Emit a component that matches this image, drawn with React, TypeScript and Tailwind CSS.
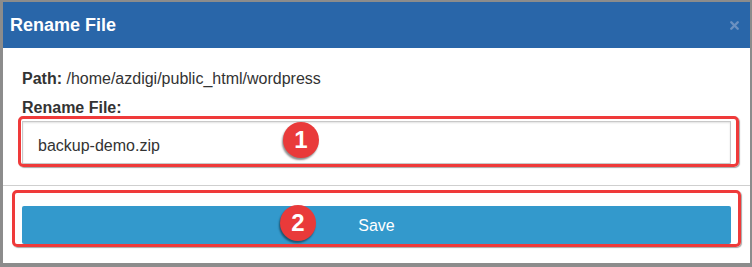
import { X } from "lucide-react";

function Badge({ n, className }: { n: string; className: string }) {
  return (
    <div
      className={`absolute flex h-[36px] w-[36px] items-center justify-center rounded-full bg-[#e93a3a] text-[24px] font-bold text-white shadow-[-1px_2px_2px_rgba(0,0,0,0.45)] ${className}`}
    >
      {n}
    </div>
  );
}

export default function App() {
  return (
    <div className="relative h-[267px] w-[752px] bg-[#8c8c8c] pb-[4px] pl-[3px] pr-[2px] pt-[2px] font-['Liberation_Sans',Arial,sans-serif]">
      <div className="flex h-full flex-col bg-white">
        {/* Header */}
        <div className="flex h-[46px] items-center justify-between bg-[#2966a9] pl-[7px] pr-[9px]">
          <h1 className="text-[18px] font-bold text-white">Rename File</h1>
          <X className="h-[13px] w-[13px] text-[#6c90c0]" strokeWidth={4.5} />
        </div>

        {/* Body */}
        <div className="px-[19px] pt-[21px]">
          <p className="text-[16px] leading-[20px] text-[#333]">
            <span className="font-bold">Path:</span> /home/azdigi/public_html/wordpress
          </p>
          <p className="mt-[9px] text-[16px] font-bold leading-[20px] text-[#333]">Rename File:</p>
          <div className="mt-[3px] flex h-[43px] items-center border border-[#c8c8c8] pl-[15px] pt-[6px] text-[16px] text-[#333] shadow-[inset_0_1px_2px_rgba(0,0,0,0.12)]">
            backup-demo.zip
          </div>
        </div>

        <div className="mt-[21px] border-t border-[#cfcfcf]" />

        {/* Footer */}
        <div className="px-[19px] pt-[20px]">
          <button className="flex h-[38px] w-full items-center justify-center rounded-[2px] bg-[#3399cc] pt-[2px] text-[16px] text-white">
            Save
          </button>
        </div>
      </div>

      {/* Annotations */}
      <div className="absolute left-[18px] top-[116px] h-[51px] w-[721px] rounded-[5px] border-[3px] border-[#ef3a3a] shadow-[1px_1px_1px_rgba(0,0,0,0.35)]" />
      <Badge n="1" className="left-[283px] top-[122px]" />
      <div className="absolute left-[12px] top-[190px] h-[57px] w-[729px] rounded-[5px] border-[3px] border-[#ef3a3a] shadow-[1px_1px_1px_rgba(0,0,0,0.35)]" />
      <Badge n="2" className="left-[280px] top-[205px]" />
    </div>
  );
}
